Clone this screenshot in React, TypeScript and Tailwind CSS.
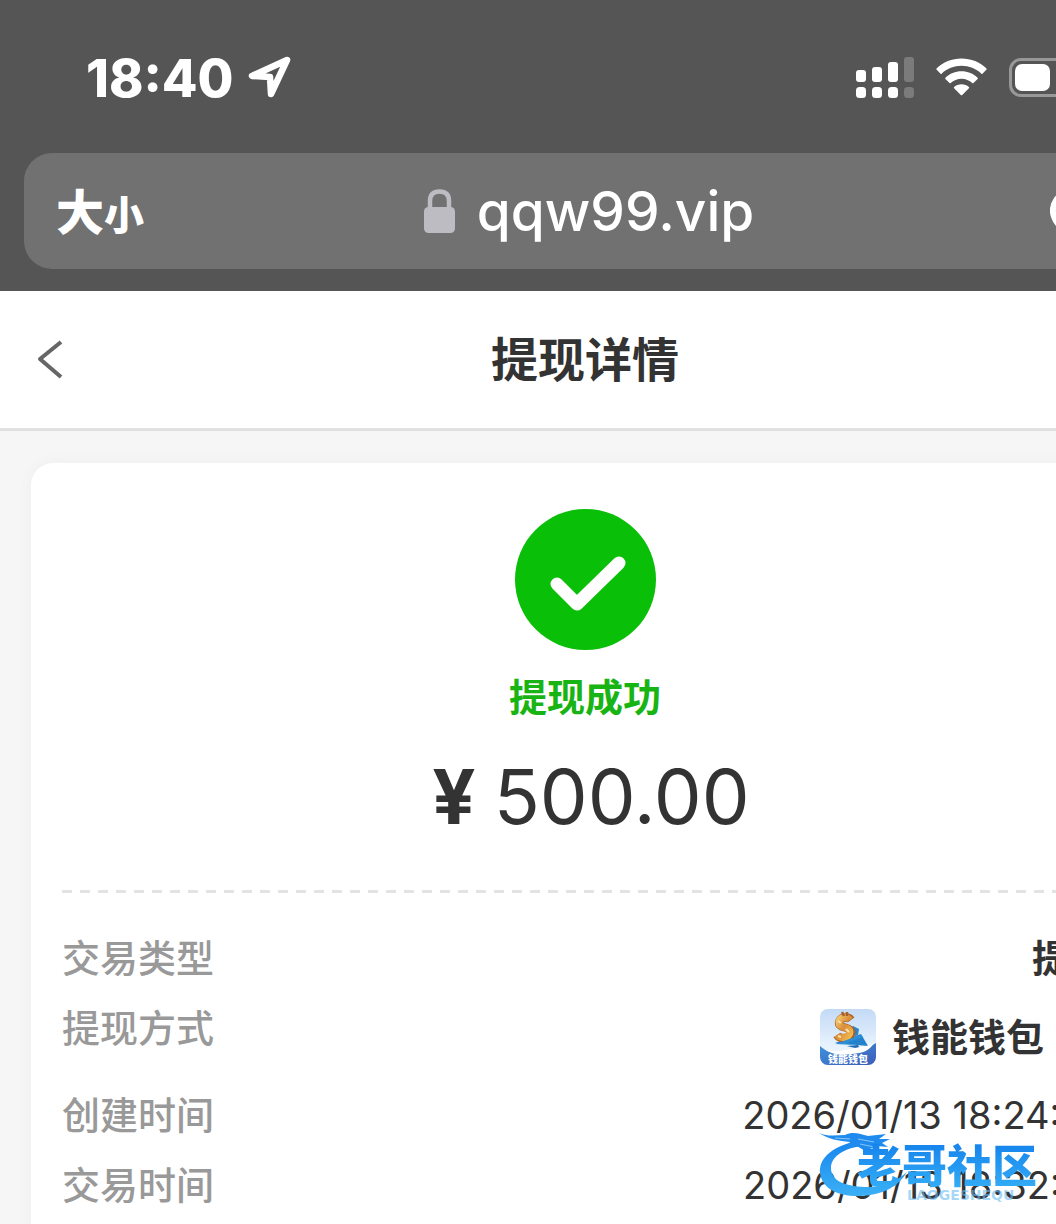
import type React from "react"

const Signal = () => (
  <svg className="h-[41px] w-[58px]" viewBox="0 0 58 41" fill="#fff" aria-hidden="true">
    <rect x="0" y="13" width="10" height="12" rx="3" />
    <rect x="16" y="10" width="10" height="15" rx="3" />
    <rect x="32" y="5" width="10" height="20" rx="3" />
    <rect x="48" y="0" width="10" height="25" rx="3" fill="#7b7b7b" />
    <rect x="0" y="30" width="10" height="11" rx="3.5" />
    <rect x="16" y="30" width="10" height="11" rx="3.5" />
    <rect x="32" y="30" width="10" height="11" rx="3.5" />
    <rect x="48" y="30" width="10" height="11" rx="3.5" fill="#7b7b7b" />
  </svg>
)

const Wifi = () => (
  <svg className="h-[38px] w-[51px]" viewBox="0 0 51 38" fill="#fff" aria-hidden="true">
    <path d="M25.5 0.5C35 0.5 44 4 50.5 10.5Q51 11 50.5 11.6L46.5 15.7Q46 16.2 45.4 15.7C40 10.6 33 7.8 25.5 7.8S11 10.6 5.6 15.7Q5 16.2 4.5 15.7L0.5 11.6Q0 11 0.5 10.5C7 4 16 0.5 25.5 0.5Z" />
    <path d="M25.5 13.3C31.7 13.3 37.3 15.7 41.6 19.7Q42.2 20.3 41.6 20.9L37.5 25Q36.9 25.5 36.3 25C33.4 22.3 29.7 20.7 25.5 20.7S17.6 22.3 14.7 25Q14.1 25.5 13.5 25L9.4 20.9Q8.8 20.3 9.4 19.7C13.7 15.7 19.3 13.3 25.5 13.3Z" />
    <path d="M25.5 26.2C28.3 26.2 30.9 27.2 32.9 28.9Q33.6 29.5 32.9 30.2L26.2 36.9Q25.5 37.5 24.8 36.9L18.1 30.2Q17.4 29.5 18.1 28.9C20.1 27.2 22.7 26.2 25.5 26.2Z" />
  </svg>
)

const Battery = () => (
  <svg className="h-[39px] w-[78px]" viewBox="0 0 78 39" aria-hidden="true">
    <rect x="1.5" y="1.5" width="69" height="36" rx="10.5" fill="none" stroke="#989898" strokeWidth="3" />
    <rect x="6" y="6" width="35" height="27" rx="7" fill="#fff" />
    <path d="M74 13q4 2 4 6.5t-4 6.5z" fill="#989898" />
  </svg>
)

const LocationArrow = () => (
  <svg className="h-[42px] w-[44px]" viewBox="0 0 44 42" fill="none" aria-hidden="true">
    <path d="M39 4L4 20L22 21L23 38Z" stroke="#fff" strokeWidth="6.5" strokeLinejoin="round" />
  </svg>
)

const Lock = () => (
  <svg className="h-[46px] w-[31px]" viewBox="0 0 31 46" aria-hidden="true">
    <path d="M6 21V13C6 6 9.5 3.5 15.5 3.5S25 6 25 13V21" fill="none" stroke="#bdbcc3" strokeWidth="4.5" />
    <rect x="0" y="19" width="31" height="26" rx="4.5" fill="#bdbcc3" />
  </svg>
)

const Reload = () => (
  <svg className="h-11 w-11" viewBox="0 0 44 44" fill="none" aria-hidden="true">
    <path d="M37 10A19 19 0 1 0 41 22" stroke="#fff" strokeWidth="6" strokeLinecap="round" />
    <path d="M38 2V12H28" stroke="#fff" strokeWidth="5" strokeLinecap="round" strokeLinejoin="round" />
  </svg>
)

const WalletLogo = () => (
  <svg className="size-14" viewBox="0 0 56 56" aria-hidden="true">
    <defs>
      <linearGradient id="sky" x1="0" y1="0" x2="0" y2="1">
        <stop offset="0" stopColor="#c3daf6" />
        <stop offset="0.7" stopColor="#eaf4fe" />
      </linearGradient>
      <linearGradient id="wave" x1="0" y1="0" x2="1" y2="1">
        <stop offset="0" stopColor="#3f94df" />
        <stop offset="1" stopColor="#3d5db8" />
      </linearGradient>
      <linearGradient id="gold" x1="0" y1="0" x2="1" y2="1">
        <stop offset="0" stopColor="#f6c86c" />
        <stop offset="0.5" stopColor="#d98d3a" />
        <stop offset="1" stopColor="#f2b84e" />
      </linearGradient>
      <clipPath id="tile">
        <rect width="56" height="56" rx="8" />
      </clipPath>
    </defs>
    <g clipPath="url(#tile)">
      <rect width="56" height="56" fill="url(#sky)" />
      <path d="M33 17L39 20L38 26L28 29Z" fill="#2a86c9" />
      <path d="M15 34L41 25L48 37L37 36Z" fill="#2481cc" />
      <path d="M31 11C28 7 19 8 19 14C19 20 31 17 31 23C31 30 20 31 17 26" fill="none" stroke="#a95f28" strokeWidth="8.5" />
      <path d="M30 11C27 7 19 8 19 14C19 20 30 17 30 23C30 29 20 30 17 26" fill="none" stroke="url(#gold)" strokeWidth="7" />
      <path d="M22 3l2 4m3-4v4" stroke="#a95f28" strokeWidth="2.5" />
      <path d="M18 12l3 2M26 20l3 3M18 27l3 1" stroke="#fbe2a5" strokeWidth="2" />
      <path d="M15 35L41 26L43 28L26 34L37 36Z" fill="#2d8fd6" />
      <path d="M27 37L38 36L40 40L31 38Z" fill="#1d67b4" />
      <path d="M0 37C11 47 22 44 32 43C44 42 49 38 56 34V56H0Z" fill="url(#wave)" />
      <path d="M4 40C13 44 22 42 31 40C42 37 49 38 54 34C49 42 43 44 32 45C20 47 11 45 4 40Z" fill="#fff" />
      <text x="28" y="54" textAnchor="middle" fill="#fff" className="font-['Noto_Sans_CJK_SC',sans-serif] text-[10px] font-black">
        钱能钱包
      </text>
    </g>
  </svg>
)

const Swoosh = () => (
  <svg className="h-[70px] w-[98px]" viewBox="0 0 98 70" aria-hidden="true">
    <defs>
      <linearGradient id="swoosh" x1="0" y1="0" x2="0" y2="1">
        <stop offset="0" stopColor="#1787ee" />
        <stop offset="1" stopColor="#3bb0f5" />
      </linearGradient>
    </defs>
    <path
      d="M30 12C11 18 0 28 1 42C3 58 20 66 42 65C64 64 80 55 88 41C78 50 62 57 46 56C24 55 12 49 12 37C12 27 22 18 42 15Z"
      fill="url(#swoosh)"
    />
    <path
      d="M0 2C9 6 18 4 26 4C34 0 41 3 49 5L67 3L60 8L71 8L63 12L69 16L58 15L51 18L60 22L46 20L38 15L26 18L31 11C20 10 9 8 0 2Z"
      fill="#1f8bef"
    />
    <path d="M16 7L31 8M39 8L55 11M41 13L60 17" stroke="#8ac5f5" strokeWidth="1" />
  </svg>
)

const Watermark = () => (
  <div className="pointer-events-none absolute top-[1131px] left-[819px] flex" aria-hidden="true">
    <Swoosh />
    <div className="-ml-[60px] pt-3">
      <p className="bg-linear-to-b from-[#1583ec] to-[#36aff6] bg-clip-text text-[45px] leading-[48px] font-black text-transparent">老哥社区</p>
      <p className="-mt-1 pl-[50px] font-['DejaVu_Sans',sans-serif] text-[14px] leading-4 font-bold text-[#6cbdf3]/60">LAOGESHEQU</p>
    </div>
  </div>
)

type RowProps = {
  label: string
  children: React.ReactNode
}

const Row: React.FC<RowProps> = ({ label, children }) => (
  <div className="flex items-start justify-between">
    <dt className="font-medium text-[#999]">{label}</dt>
    <dd className="text-[#333]">{children}</dd>
  </div>
)

const App: React.FC = () => {
  return (
    <div className="relative min-h-screen overflow-hidden bg-[#f6f6f6] font-[Inter,'Noto_Sans_CJK_SC',sans-serif]">
      <div className="-mr-[114px]">
        <div className="bg-[#555] pb-[22px]">
          <div className="flex items-center justify-between pt-[45px] pr-[83px] pb-11 pl-[86px]">
            <div className="flex items-center gap-[14px] text-white">
              <time className="pt-1 text-[52px] leading-[60px] font-extrabold">18:40</time>
              <LocationArrow />
            </div>
            <div className="flex items-center gap-[22px]">
              <Signal />
              <Wifi />
              <Battery />
            </div>
          </div>
          <div className="mx-6 flex h-[116px] items-center rounded-[28px] bg-[#717171] pr-6 pl-8 text-white">
            <div className="flex-1">
              <button type="button" className="pt-1 font-black">
                <span className="text-[48px]">大</span>
                <span className="text-[40px]">小</span>
              </button>
            </div>
            <div className="flex items-center gap-[22px]">
              <Lock />
              <span className="text-[55px] leading-[68px] font-medium">qqw99.vip</span>
            </div>
            <div className="flex flex-1 justify-end">
              <button type="button" aria-label="刷新" className="mr-7">
                <Reload />
              </button>
            </div>
          </div>
        </div>

        <header className="flex items-center border-b-[3px] border-[#e1e1e1] bg-white px-9 py-[34px]">
          <div className="flex flex-1">
            <button type="button" aria-label="返回">
              <svg className="h-10 w-7" viewBox="0 0 28 40" fill="none" aria-hidden="true">
                <path d="M25 2L4 19L25 37" stroke="#666" strokeWidth="4" strokeLinejoin="round" />
              </svg>
            </button>
          </div>
          <h1 className="text-[47px] leading-[69px] font-bold text-[#333]">提现详情</h1>
          <div className="flex-1" />
        </header>

        <main className="mx-[31px] mt-8 rounded-[22px] bg-white px-[31px] pt-[46px] pb-10 shadow-[0_0_16px_rgba(0,0,0,0.04)]">
          <div className="flex flex-col items-center">
            <svg className="size-[141px]" viewBox="0 0 141 141" aria-hidden="true">
              <circle cx="70.5" cy="70.5" r="70.5" fill="#0abf08" />
              <path d="M42 75L62 95L104 54" fill="none" stroke="#fff" strokeWidth="13" strokeLinecap="round" strokeLinejoin="round" />
            </svg>
            <p className="mt-5 text-[38px] leading-[54px] font-bold text-[#18b414]">提现成功</p>
            <p className="mt-[26px] flex gap-[18px] pl-3 text-[76px] leading-[92px] text-[#333]">
              <span className="font-bold">¥</span>
              <span>500.00</span>
            </p>
          </div>
          <div className="mt-12 h-[3px] bg-[repeating-linear-gradient(to_right,#e3e3e3_0_10px,transparent_10px_18px)]" />
          <dl className="mt-[38px] flex flex-col gap-4 text-[38px] leading-[54px]">
            <Row label="交易类型">
              <span className="font-bold">提现</span>
            </Row>
            <Row label="提现方式">
              <span className="flex h-[71px] items-center gap-4 pr-16 font-bold">
                <WalletLogo />
                钱能钱包
              </span>
            </Row>
            <Row label="创建时间">2026/01/13 18:24:08</Row>
            <Row label="交易时间">2026/01/13 18:32:20</Row>
          </dl>
        </main>
      </div>
      <Watermark />
    </div>
  )
}

export default App
